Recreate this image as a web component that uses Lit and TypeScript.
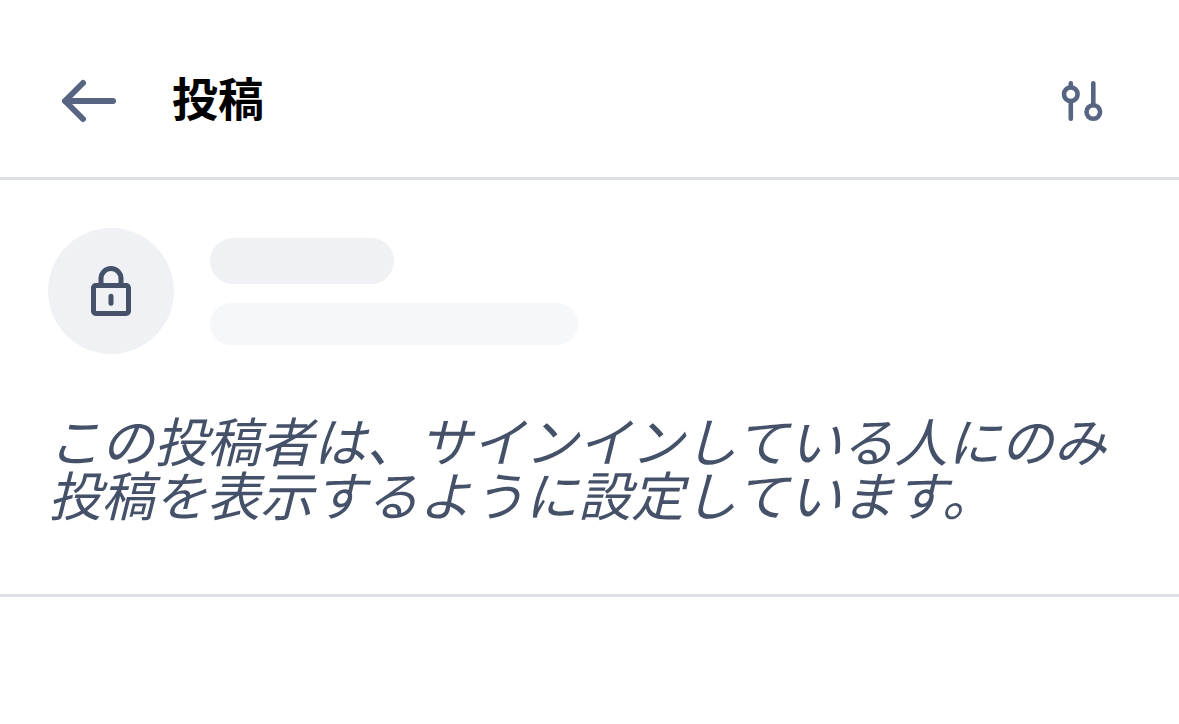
import { LitElement, html, css } from "lit";
import { customElement } from "lit/decorators.js";

@customElement("app-root")
export class AppRoot extends LitElement {
  static styles = css`
    :host {
      display: block;
      min-height: 100vh;
      background: #fff;
      color: #445168;
      font-family: Inter, "Noto Sans CJK JP", sans-serif;
    }
    .header {
      display: flex;
      align-items: center;
      gap: 48px;
      padding: 61px 68px 36px 52px;
      border-bottom: 3px solid #dcdfe5;
    }
    .icon-button {
      display: flex;
      padding: 4px;
      border: 0;
      background: none;
      color: #576582;
      cursor: pointer;
    }
    .title {
      flex: 1;
      margin: 0;
      padding-bottom: 4px;
      font-size: 46px;
      line-height: 76px;
      font-weight: 700;
      color: #000;
    }
    .post {
      padding: 48px 48px 70px;
      border-bottom: 3px solid #dcdfe5;
    }
    .author {
      display: flex;
      align-items: center;
      gap: 36px;
    }
    .avatar {
      display: flex;
      align-items: center;
      justify-content: center;
      width: 126px;
      height: 126px;
      border-radius: 50%;
      background: #eff1f5;
    }
    .lines {
      display: grid;
      gap: 19px;
    }
    .name {
      width: 184px;
      height: 46px;
      border-radius: 23px;
      background: #eff1f5;
    }
    .handle {
      width: 368px;
      height: 42px;
      border-radius: 21px;
      background: #f6f7f9;
    }
    .message {
      margin: 62px 0 0;
      font-size: 53px;
      line-height: 54px;
      font-weight: 400;
      font-style: italic;
    }
  `;

  render() {
    return html`
      <header class="header">
        <button class="icon-button" aria-label="戻る">
          <svg width="64" height="64" viewBox="0 0 64 64" fill="none" stroke="currentColor" stroke-width="6" stroke-linecap="round" stroke-linejoin="round">
            <path d="M57 32H9M27 14L9 32L27 50" />
          </svg>
        </button>
        <h1 class="title">投稿</h1>
        <button class="icon-button" aria-label="表示設定">
          <svg width="50" height="50" viewBox="0 0 50 50" fill="none" stroke="currentColor" stroke-width="4.6" stroke-linecap="round">
            <circle cx="13.800" cy="18.200" r="6.800" />
            <path d="M13.800 7.300V11M13.800 25V42.700M36.300 7.300V29" />
            <circle cx="36.300" cy="36" r="6.800" />
          </svg>
        </button>
      </header>
      <article class="post">
        <div class="author">
          <div class="avatar">
            <svg width="54" height="54" viewBox="0 0 54 54" fill="none" stroke="currentColor" stroke-width="5" stroke-linecap="round" stroke-linejoin="round">
              <rect x="9.500" y="21.500" width="35" height="28" rx="2.200" />
              <path d="M17 21.500V14.500A10 10 0 0 1 37 14.500V21.500M27 32.300V39.200" />
            </svg>
          </div>
          <div class="lines">
            <div class="name"></div>
            <div class="handle"></div>
          </div>
        </div>
        <p class="message">この投稿者は、サインインしている人にのみ投稿を表示するように設定しています。</p>
      </article>
    `;
  }
}
